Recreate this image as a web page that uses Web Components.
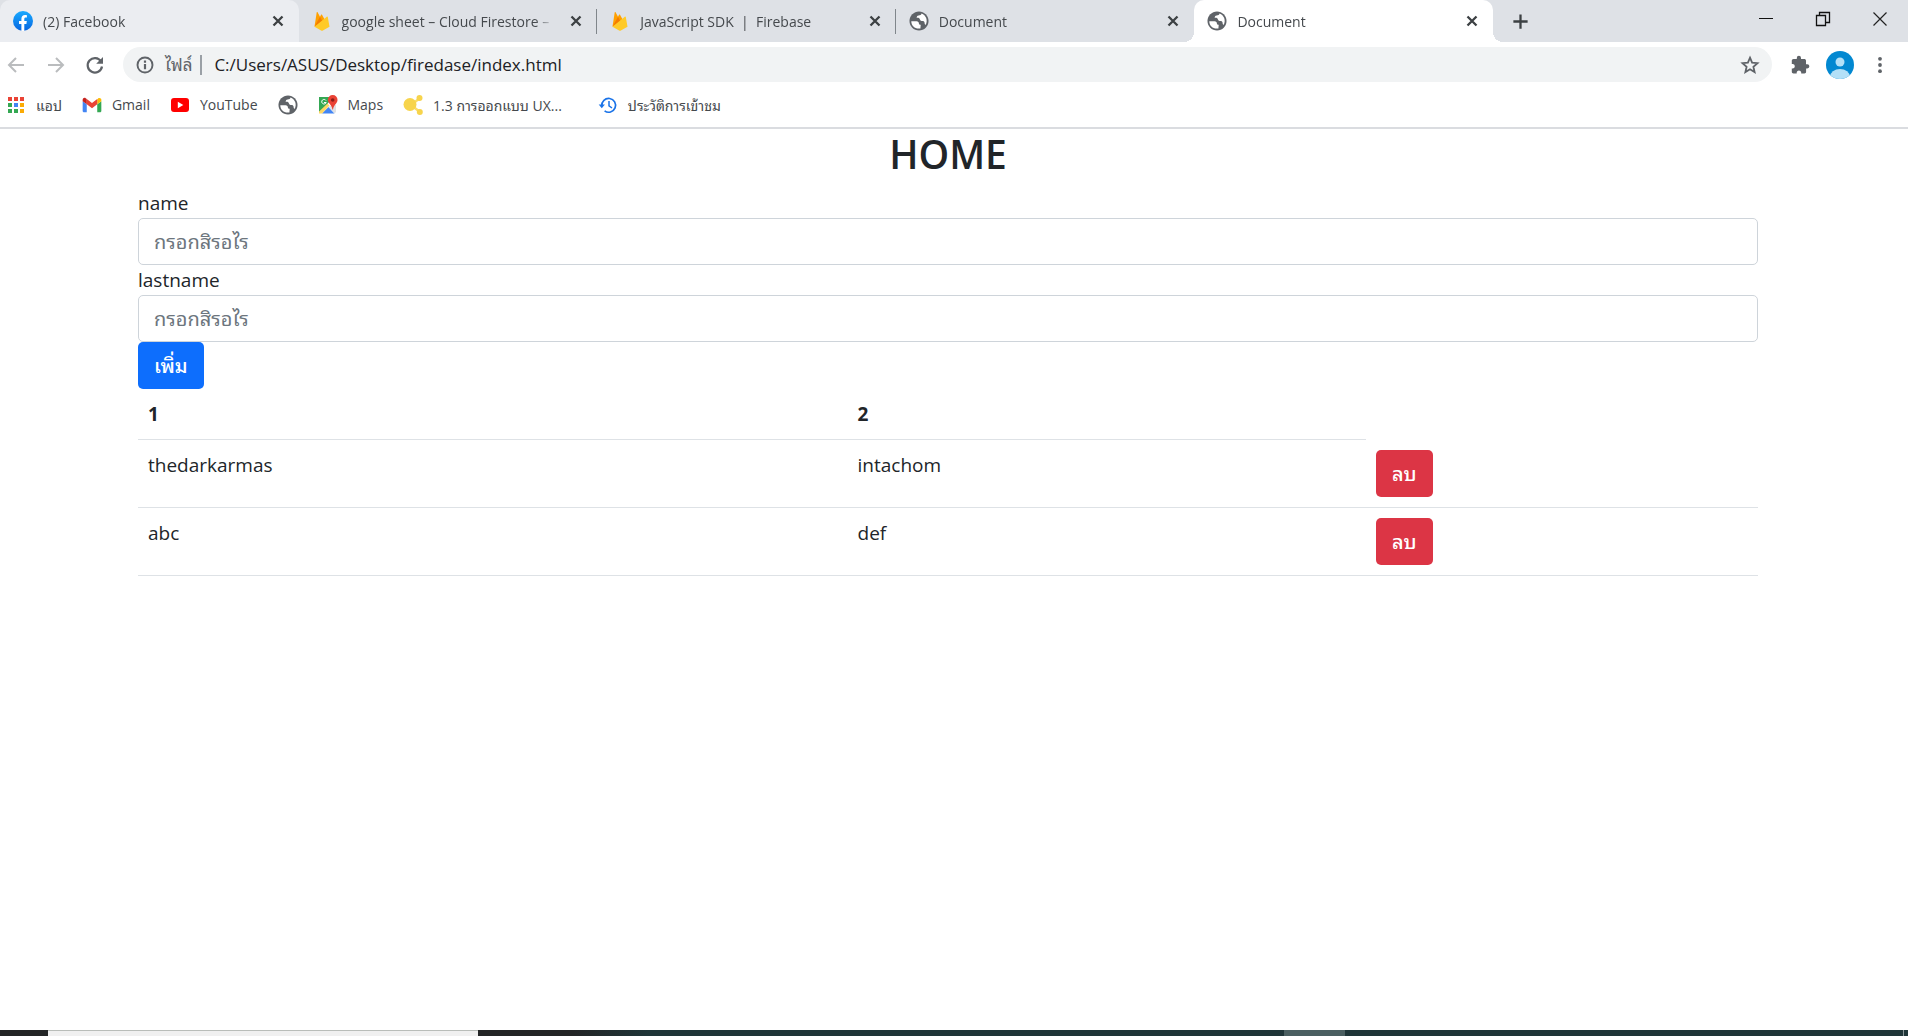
<!DOCTYPE html>
<html lang="th">
<head>
<meta charset="utf-8">
<title>Document</title>
<style>
html, body { margin: 0; height: 100%; }
body { font-family: "Open Sans", "Noto Sans", "Noto Sans Thai Looped", "Loma", "Noto Sans Thai", sans-serif; color: #212529; background: #fff; }
</style>
</head>
<body>
<browser-window></browser-window>
<script>
const ICONS = {
  facebook: '<svg viewBox="0 0 20 20"><defs><linearGradient id="f" x2="0" y2="1"><stop stop-color="#19aaff"/><stop offset="1" stop-color="#0665e0"/></linearGradient></defs><circle cx="10" cy="10" r="10" fill="url(#f)"/><path fill="#fff" d="M8.4 20v-7H6v-3h2.400V7.900C8.400 5.300 9.800 4 12 4c.9 0 1.900.2 1.900.2v2.300h-1.200c-1.100 0-1.400.7-1.400 1.400V10h2.500l-.4 3h-2.100v7z"/></svg>',
  firebase: '<svg viewBox="0 0 20 20"><path fill="#ffa000" d="M2.500 15.500 4.700 1.500c.1-.5.7-.6.9-.2L8 5.800l1.100-2c.2-.4.7-.4.9 0l5 9z"/><path fill="#f57c00" d="M2.500 15.500 8 5.800l2.500 4.400z"/><path fill="#ffca28" d="m2.500 15.700 12.300-10c.3-.4.9-.2 1 .3l1.700 9.700-6.600 3.800c-.6.3-1.200.3-1.800 0z"/></svg>',
  globe: '<svg viewBox="1.500 1.500 21 21"><path fill="#5f6368" d="M12 2C6.480 2 2 6.480 2 12s4.480 10 10 10 10-4.480 10-10S17.520 2 12 2z"/><path fill="#fff" d="M3.900 12.200h5.600c1.500 0 2.400 1 2.400 2.300 0 1.100 1 1.400 1.900 1.400l-.3 3.900c-5.200 1.100-9.600-2.700-9.600-7.600zM14.600 4.200c-.2 1.600-1.500 2-3 2.100-1.700.2-1.900 1.100-2 2.500 1.700-.4 3.100.2 3.400 1.700.4 1.600 1.800 1.500 3 1.500 1.700.1 2 1.500 2 3.200l1 1c2.600-4.900.4-10.200-4.400-12z"/></svg>',
  close: '<svg viewBox="0 0 20 20"><path d="m5.500 5.500 9 9m0-9-9 9" stroke="#3c4043" stroke-width="2.300"/></svg>',
  plus: '<svg viewBox="0 0 20 20"><path d="M10 2.500v15M2.500 10h15" stroke="#3c4043" stroke-width="2.400"/></svg>',
  minimize: '<svg viewBox="0 0 20 20"><path d="M3 9.500h14" stroke="#111" stroke-width="1"/></svg>',
  restore: '<svg viewBox="0 0 20 20"><path d="M3.500 6.500h9v10h-9zM6.500 6.500v-3h10v10h-4" fill="none" stroke="#111" stroke-width="1.300"/></svg>',
  quit: '<svg viewBox="0 0 20 20"><path d="m3.500 3.500 13 13m0-13-13 13" stroke="#222" stroke-width="1.200"/></svg>',
  back: '<svg viewBox="0 0 20 20"><path d="M18 10H3m7-7-7 7 7 7" fill="none" stroke="#babcbe" stroke-width="2"/></svg>',
  forward: '<svg viewBox="0 0 20 20"><path d="M2 10h15m-7-7 7 7-7 7" fill="none" stroke="#babcbe" stroke-width="2"/></svg>',
  reload: '<svg viewBox="0 0 20 20"><path d="M16 6.500a7.200 7.200 0 1 0 1 5" fill="none" stroke="#5f6368" stroke-width="2.200"/><path d="M18 2v6.800h-6.800z" fill="#5f6368"/></svg>',
  info: '<svg viewBox="0 0 20 20"><circle cx="10" cy="10" r="7.500" fill="none" stroke="#5f6368" stroke-width="1.900"/><path d="M10 9v5.200M10 5.600v2.200" stroke="#5f6368" stroke-width="2.200"/></svg>',
  star: '<svg viewBox="0 0 20 20"><path d="m10 2.700 2.100 5 5.400.5-4.100 3.600 1.200 5.300-4.600-2.800-4.600 2.800 1.200-5.300L2.500 8.200l5.400-.5z" fill="none" stroke="#5f6368" stroke-width="1.800"/></svg>',
  puzzle: '<svg viewBox="0 0 20 20"><path fill="#5f6368" d="M17.200 9.200H16V5.800c0-1-.8-1.700-1.700-1.700H11V2.900a2.100 2.100 0 0 0-4.200 0v1.200H3.500c-1 0-1.700.8-1.700 1.700V9H3a2.300 2.300 0 0 1 0 4.500H1.800v3.200c0 1 .8 1.700 1.700 1.700h3.200v-1.200a2.300 2.300 0 0 1 4.500 0v1.200h3.200c1 0 1.700-.8 1.700-1.700v-3.300h1.200a2.100 2.100 0 0 0-.1-4.200z"/></svg>',
  avatar: '<svg viewBox="0 0 28 28"><defs><clipPath id="a"><circle cx="14" cy="14" r="14"/></clipPath></defs><g clip-path="url(#a)"><path fill="#0288d1" d="M0 0h28v28H0z"/><circle cx="14" cy="11" r="4.500" fill="#b3e0f7"/><ellipse cx="14" cy="26" rx="10" ry="8" fill="#b3e0f7"/></g></svg>',
  dots: '<svg viewBox="0 0 20 20"><g fill="#5f6368"><circle cx="10" cy="3.800" r="1.900"/><circle cx="10" cy="10" r="1.900"/><circle cx="10" cy="16.200" r="1.900"/></g></svg>',
  apps: '<svg viewBox="0 0 20 20"><path fill="#ea4335" d="M2 2h4v4H2zM8 2h4v4H8zM14 2h4v4h-4z"/><path fill="#34a853" d="M2 8h4v4H2zM2 14h4v4H2zM8 14h4v4H8z"/><path fill="#4285f4" d="M8 8h4v4H8z"/><path fill="#fbab05" d="M14 8h4v4h-4zM14 14h4v4h-4z"/></svg>',
  gmail: '<svg viewBox="-.5 0 21 20"><path fill="#4285f4" d="M1.500 17.500h3V9.200L.2 6v10.200c0 .7.600 1.300 1.300 1.300z"/><path fill="#34a853" d="M15.500 17.500h3c.7 0 1.300-.6 1.300-1.300V6l-4.300 3.200z"/><path fill="#fbbc04" d="M15.500 4.300v4.900L19.800 6V4.500c0-1.700-1.900-2.500-3.200-1.600z"/><path fill="#ea4335" d="M4.500 9.200V3.800L10 8l5.500-4.200v5.400L10 13.400z"/><path fill="#c5221f" d="M.2 4.500V6l4.300 3.200V3.800l-1.100-.9C2.100 1.900.2 2.800.2 4.500z"/></svg>',
  youtube: '<svg viewBox="0 0 20 20"><rect x="1" y="3" width="18" height="14" rx="3" fill="#f00"/><path fill="#fff" d="m7.800 6.800 5.500 3.200-5.500 3.200z"/></svg>',
  maps: '<svg viewBox="0 0 20 20"><path fill="#34a853" d="M1 2h14L3 17l-2 .5z"/><path fill="#4285f4" d="M4 18.500 10.500 12l6 6.500z"/><path fill="#dfe1e5" d="m12 11 6-1v7l-1.500 1.500L10.500 12z"/><path fill="#fdd663" d="m1 16.500 8.500-8 2 2L4 18.500H1z"/><path d="M8 5.500a2.300 2.300 0 1 0 .2 2H6" fill="none" stroke="#fff" stroke-width="1"/><path fill="#ea4335" d="M14.700 0a4.800 4.800 0 0 0-4.800 5c0 3.500 4 4.500 4.500 9.500h.6c.7-5 4.500-6 4.500-9.500a4.800 4.800 0 0 0-4.800-5z"/><circle cx="14.700" cy="5" r="1.800" fill="#8c1d18"/></svg>',
  nodes: '<svg viewBox="0 0 20 20"><path d="m8 10 9-7M8 10l9 7" stroke="#fbdc68" stroke-width="2.400"/><g fill="#f7d44c"><circle cx="7" cy="9.500" r="6.500"/><circle cx="16.500" cy="3" r="3"/><circle cx="16.800" cy="17" r="3"/></g></svg>',
  history: '<svg viewBox="0 0 20 20"><path d="M3.800 11a6.900 6.900 0 1 1 2.800 4.900" fill="none" stroke="#1a73e8" stroke-width="1.700"/><path fill="#1a73e8" d="M.7 9.500h6.200l-3.100 3.700z"/><path d="M11 6v4.800l3 2.200" fill="none" stroke="#1a73e8" stroke-width="1.500"/></svg>'
};

const RESET = `
  *, *::before { box-sizing: border-box; }
  button, input { font: inherit; color: inherit; margin: 0; }
  a { color: inherit; text-decoration: none; }
`;

function define(name, css, html) {
  customElements.define(name, class extends HTMLElement {
    connectedCallback() {
      if (this.shadowRoot) return;
      const body = typeof html === 'function' ? html(this) : html;
      this.attachShadow({ mode: 'open' }).innerHTML = `<style>${RESET}${css}</style>${body}`;
    }
  });
}

define('ui-icon', `
  :host { display: block; flex: none; width: var(--icon, 20px); height: var(--icon, 20px); }
  svg { display: block; width: 100%; height: 100%; }
`, el => ICONS[el.getAttribute('name')]);

define('icon-button', `
  :host { display: block; flex: none; }
  button { display: flex; align-items: center; justify-content: center; width: 100%; height: 100%; padding: 0; border: 0; background: none; }
`, el => `<button type="button" aria-label="${el.getAttribute('label')}"><ui-icon name="${el.getAttribute('icon')}"></ui-icon></button>`);

define('browser-tab', `
  :host { display: flex; box-sizing: border-box; align-items: center; flex: 1 1 0; min-width: 0; height: 42px; padding: 0 10px 0 13px; position: relative; font-size: 14px; color: #45494d; }
  :host([state="hover"]) { background: #ebedf1; border-radius: 10px 10px 0 0; }
  :host([state="active"]) { background: #fff; border-radius: 10px 10px 0 0; }
  :host([state="active"])::before, :host([state="active"])::after {
    content: ""; position: absolute; bottom: 0; width: 10px; height: 10px; }
  :host([state="active"])::before { left: -10px; background: radial-gradient(circle at 0 0, transparent 10px, #fff 10px); }
  :host([state="active"])::after { right: -10px; background: radial-gradient(circle at 100% 0, transparent 10px, #fff 10px); }
  .line { position: absolute; right: 0; top: 9px; width: 1px; height: 25px; background: #80868b; }
  .title { flex: 1; min-width: 0; margin: 0 10px; overflow: hidden; white-space: nowrap;
    -webkit-mask-image: linear-gradient(to right, #000 calc(100% - 20px), transparent); }
  icon-button { width: 22px; height: 22px; --icon: 20px; }
`, el => `<ui-icon name="${el.getAttribute('icon')}"></ui-icon><a class="title" href="#"><slot></slot></a><icon-button label="Close tab" icon="close"></icon-button>${el.hasAttribute('divided') ? '<span class="line"></span>' : ''}`);

define('tab-strip', `
  :host { display: flex; height: 42px; background: #dee1e6; }
  .tabs { display: flex; flex: 0 1 1493px; min-width: 0; }
  .new { width: 54px; --icon: 19px; }
  .controls { display: flex; margin-left: auto; }
  .controls icon-button { width: 57px; height: 37px; }
`, `<div class="tabs">
  <browser-tab icon="facebook" state="hover">(2) Facebook</browser-tab>
  <browser-tab icon="firebase" divided>google sheet – Cloud Firestore –</browser-tab>
  <browser-tab icon="firebase" divided>JavaScript SDK &nbsp;|&nbsp; Firebase</browser-tab>
  <browser-tab icon="globe">Document</browser-tab>
  <browser-tab icon="globe" state="active">Document</browser-tab>
</div>
<icon-button class="new" label="New tab" icon="plus"></icon-button>
<div class="controls">
  <icon-button label="Minimize" icon="minimize"></icon-button>
  <icon-button label="Restore" icon="restore"></icon-button>
  <icon-button label="Close" icon="quit"></icon-button>
</div>`);

define('tool-bar', `
  :host { display: flex; box-sizing: border-box; align-items: center; height: 45px; padding: 0 18px 0 6px; }
  .nav-group { display: flex; width: 117px; justify-content: space-between; padding-right: 18px; }
  .nav-group icon-button { width: 20px; height: 35px; }
  .omnibox { display: flex; align-items: center; flex: 1; height: 35px; padding: 0 12px; border-radius: 18px; background: #f1f3f4; font-size: 17px; }
  .file { margin-left: 10px; padding-right: 8px; color: #5f6368; border-right: 2px solid #9aa0a6; line-height: 20px; white-space: nowrap; }
  input { flex: 1; min-width: 0; height: 30px; padding: 0 12px; border: 0; background: none; color: #202124; outline: 0; }
  .end { display: flex; align-items: center; gap: 16px; margin-left: 18px; }
  .avatar { --icon: 28px; }
`, `<div class="nav-group">
  <icon-button label="Back" icon="back"></icon-button>
  <icon-button label="Forward" icon="forward"></icon-button>
  <icon-button label="Reload" icon="reload"></icon-button>
</div>
<div class="omnibox">
  <ui-icon name="info"></ui-icon>
  <label class="file" for="url">ไฟล์</label>
  <input id="url" type="text" value="C:/Users/ASUS/Desktop/firedase/index.html">
  <icon-button label="Bookmark" icon="star"></icon-button>
</div>
<div class="end">
  <icon-button label="Extensions" icon="puzzle"></icon-button>
  <icon-button class="avatar" label="Profile" icon="avatar"></icon-button>
  <icon-button label="Menu" icon="dots"></icon-button>
</div>`);

define('book-mark', `
  :host { display: block; }
  a { display: flex; align-items: center; gap: 10px; white-space: nowrap; }
`, el => `<a href="#"><ui-icon name="${el.getAttribute('icon')}"></ui-icon><slot></slot></a>`);

define('bookmarks-bar', `
  :host { display: flex; box-sizing: border-box; align-items: center; gap: 20px; height: 42px; padding: 0 6px 5px; border-bottom: 2px solid #dadce0; font-size: 14px; color: #45494d; }
  .lone { width: 20px; }
  .history { margin-left: 16px; }
`, `<book-mark icon="apps">แอป</book-mark>
<book-mark icon="gmail">Gmail</book-mark>
<book-mark icon="youtube">YouTube</book-mark>
<book-mark class="lone" icon="globe"></book-mark>
<book-mark icon="maps">Maps</book-mark>
<book-mark icon="nodes">1.3 การออกแบบ UX...</book-mark>
<book-mark class="history" icon="history">ประวัติการเข้าชม</book-mark>`);

define('action-button', `
  :host { display: block; }
  button { display: block; height: 47px; padding: 0 16px; border: 0; border-radius: 5px; background: #0d6efd; color: #fff; font-size: 20px; font-weight: 500; line-height: 30px; }
  :host([kind="danger"]) button { background: #dc3545; }
`, `<button type="button"><slot></slot></button>`);

define('text-field', `
  :host { display: block; }
  label { display: block; line-height: 30px; }
  input { display: block; width: 100%; height: 47px; padding: 0 15px; border: 1px solid #ced4da; border-radius: 5px; background: #fff; font-size: 20px; outline: 0; }
  input::placeholder { color: #6c757d; opacity: 1; }
`, el => `<label for="field">${el.getAttribute('label')}</label><input id="field" type="text" placeholder="${el.getAttribute('hint')}">`);

define('people-table', `
  :host { display: block; }
  table { width: 100%; border-collapse: separate; border-spacing: 0; table-layout: fixed; }
  .first { width: 43.8%; } .second { width: 32%; }
  th, td { padding: 10px; text-align: left; vertical-align: top; line-height: 30px; border-bottom: 1px solid #dee2e6; }
  th { font-weight: 700; }
`, `<table>
  <colgroup><col class="first"><col class="second"><col></colgroup>
  <thead><tr><th scope="col">1</th><th scope="col">2</th></tr></thead>
  <tbody>
    <tr><td>thedarkarmas</td><td>intachom</td><td><action-button kind="danger">ลบ</action-button></td></tr>
    <tr><td>abc</td><td>def</td><td><action-button kind="danger">ลบ</action-button></td></tr>
  </tbody>
</table>`);

define('home-page', `
  :host { display: block; flex: 1; padding: 1px 12px 0 0; font-size: 19px; }
  main { max-width: 1620px; margin: 0 auto; padding: 0 15px; }
  h1 { margin: 0 0 10px; font-size: 39px; font-weight: 600; line-height: 48px; text-align: center; }
`, `<main>
  <h1>HOME</h1>
  <text-field label="name" hint="กรอกสิรอไร"></text-field>
  <text-field label="lastname" hint="กรอกสิรอไร"></text-field>
  <action-button>เพิ่ม</action-button>
  <people-table></people-table>
</main>`.replace('<main>', '<main style="box-sizing: content-box">'));

define('task-bar', `
  :host { display: flex; height: 6px; background: linear-gradient(to right, #232526 30%, #1f3538 34%); }
  .start { flex: 0 0 48px; }
  .search { flex: 0 0 430px; background: #f0f0f0; border-top: 1px solid #b9bdb9; }
  .task { flex: 0 0 61px; margin-left: auto; background: #4b5f61; }
  .tray { flex: 0 0 558px; }
  .desk { flex: 0 0 5px; border-left: 1px solid #8a9698; }
`, `<span class="start"></span><span class="search"></span><span class="task"></span><span class="tray"></span><span class="desk"></span>`);

define('browser-window', `
  :host { display: flex; flex-direction: column; min-height: 100vh; }
`, `<tab-strip></tab-strip><tool-bar></tool-bar><bookmarks-bar></bookmarks-bar><home-page></home-page><task-bar></task-bar>`);
</script>
</body>
</html>
